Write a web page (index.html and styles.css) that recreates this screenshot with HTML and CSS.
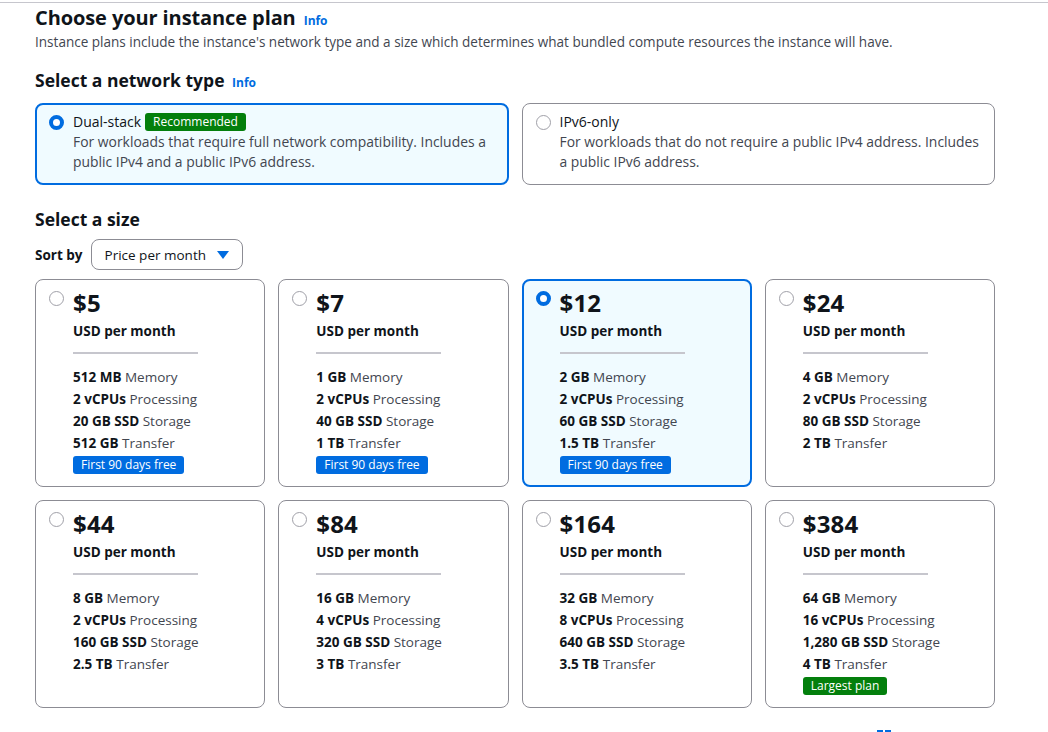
FILE: index.html
```html
<!DOCTYPE html>
<html lang="en">
<head>
<meta charset="utf-8">
<title>Choose your instance plan</title>
<link rel="stylesheet" href="styles.css">
</head>
<body>
<div class="topbar"></div>
<main class="page">
  <header class="section-head">
    <h1 class="h1">Choose your instance plan <a class="info" href="#">Info</a></h1>
    <p class="lead">Instance plans include the instance's network type and a size which determines what bundled compute resources the instance will have.</p>
  </header>

  <h2 class="h2 net-h">Select a network type <a class="info" href="#">Info</a></h2>
  <div class="net-grid">
    <label class="tile net selected">
      <span class="radio on"></span>
      <span class="tile-body">
        <span class="net-title">Dual-stack <span class="badge green">Recommended</span></span>
        <span class="net-desc">For workloads that require full network compatibility. Includes a public IPv4 and a public IPv6 address.</span>
      </span>
    </label>
    <label class="tile net">
      <span class="radio"></span>
      <span class="tile-body">
        <span class="net-title">IPv6-only</span>
        <span class="net-desc">For workloads that do not require a public IPv4 address. Includes a public IPv6 address.</span>
      </span>
    </label>
  </div>

  <h2 class="h2 size-h">Select a size</h2>
  <div class="sort-row">
    <span class="sort-label">Sort by</span>
    <button class="select"><span>Price per month</span><svg class="caret" width="12" height="8" viewBox="0 0 12 8"><path d="M0 0h12L6 8z" fill="#006ce0"/></svg></button>
  </div>

  <div class="plan-grid">
    <label class="tile plan">
      <span class="radio"></span>
      <span class="tile-body">
        <span class="price">$5</span>
        <span class="per">USD per month</span>
        <span class="rule"></span>
        <span class="spec"><b>512 MB</b> Memory</span>
        <span class="spec"><b>2 vCPUs</b> Processing</span>
        <span class="spec"><b>20 GB SSD</b> Storage</span>
        <span class="spec"><b>512 GB</b> Transfer</span>
        <span class="badge blue">First 90 days free</span>
      </span>
    </label>
    <label class="tile plan">
      <span class="radio"></span>
      <span class="tile-body">
        <span class="price">$7</span>
        <span class="per">USD per month</span>
        <span class="rule"></span>
        <span class="spec"><b>1 GB</b> Memory</span>
        <span class="spec"><b>2 vCPUs</b> Processing</span>
        <span class="spec"><b>40 GB SSD</b> Storage</span>
        <span class="spec"><b>1 TB</b> Transfer</span>
        <span class="badge blue">First 90 days free</span>
      </span>
    </label>
    <label class="tile plan selected">
      <span class="radio on"></span>
      <span class="tile-body">
        <span class="price">$12</span>
        <span class="per">USD per month</span>
        <span class="rule"></span>
        <span class="spec"><b>2 GB</b> Memory</span>
        <span class="spec"><b>2 vCPUs</b> Processing</span>
        <span class="spec"><b>60 GB SSD</b> Storage</span>
        <span class="spec"><b>1.5 TB</b> Transfer</span>
        <span class="badge blue">First 90 days free</span>
      </span>
    </label>
    <label class="tile plan">
      <span class="radio"></span>
      <span class="tile-body">
        <span class="price">$24</span>
        <span class="per">USD per month</span>
        <span class="rule"></span>
        <span class="spec"><b>4 GB</b> Memory</span>
        <span class="spec"><b>2 vCPUs</b> Processing</span>
        <span class="spec"><b>80 GB SSD</b> Storage</span>
        <span class="spec"><b>2 TB</b> Transfer</span>
      </span>
    </label>
    <label class="tile plan">
      <span class="radio"></span>
      <span class="tile-body">
        <span class="price">$44</span>
        <span class="per">USD per month</span>
        <span class="rule"></span>
        <span class="spec"><b>8 GB</b> Memory</span>
        <span class="spec"><b>2 vCPUs</b> Processing</span>
        <span class="spec"><b>160 GB SSD</b> Storage</span>
        <span class="spec"><b>2.5 TB</b> Transfer</span>
      </span>
    </label>
    <label class="tile plan">
      <span class="radio"></span>
      <span class="tile-body">
        <span class="price">$84</span>
        <span class="per">USD per month</span>
        <span class="rule"></span>
        <span class="spec"><b>16 GB</b> Memory</span>
        <span class="spec"><b>4 vCPUs</b> Processing</span>
        <span class="spec"><b>320 GB SSD</b> Storage</span>
        <span class="spec"><b>3 TB</b> Transfer</span>
      </span>
    </label>
    <label class="tile plan">
      <span class="radio"></span>
      <span class="tile-body">
        <span class="price">$164</span>
        <span class="per">USD per month</span>
        <span class="rule"></span>
        <span class="spec"><b>32 GB</b> Memory</span>
        <span class="spec"><b>8 vCPUs</b> Processing</span>
        <span class="spec"><b>640 GB SSD</b> Storage</span>
        <span class="spec"><b>3.5 TB</b> Transfer</span>
      </span>
    </label>
    <label class="tile plan">
      <span class="radio"></span>
      <span class="tile-body">
        <span class="price">$384</span>
        <span class="per">USD per month</span>
        <span class="rule"></span>
        <span class="spec"><b>64 GB</b> Memory</span>
        <span class="spec"><b>16 vCPUs</b> Processing</span>
        <span class="spec"><b>1,280 GB SSD</b> Storage</span>
        <span class="spec"><b>4 TB</b> Transfer</span>
        <span class="badge green">Largest plan</span>
      </span>
    </label>
  </div>

  <p class="foot">Instance plans are charged hourly, up to the monthly price. Data transfer in excess of the allowance is charged. Learn more <svg width="14" height="14" viewBox="0 0 14 14" class="ext"><rect x="0" y="0" width="6" height="6" fill="#006ce0"/><rect x="8" y="0" width="6" height="6" fill="#006ce0"/></svg></p>
</main>
</body>
</html>
```

FILE: styles.css
```css
* { box-sizing: border-box; }
html, body { margin: 0; padding: 0; background: #fff; }
body {
  font-family: "Open Sans", "Noto Sans", Arial, sans-serif;
  color: #0f141a;
  font-size: 14px;
  line-height: 20px;
  overflow: hidden;
  height: 732px;
}
.topbar { height: 3px; border-bottom: 1px solid #c6c6cd; }
.page { width: 960px; margin-left: 35px; }
.h1 {
  margin: 2px 0 0;
  font-size: 20px;
  line-height: 26px;
  font-weight: 700;
  letter-spacing: -0.1px;
}
.info {
  font-size: 12px;
  line-height: 1;
  font-weight: 700;
  color: #006ce0;
  text-decoration: none;
  margin-left: 3px;
}
.lead { margin: 1px 0 0; color: #424650; font-size: 13.55px; }
.h2 {
  margin: 0;
  font-size: 17.5px;
  line-height: 24px;
  font-weight: 700;
}
.net-h { margin-top: 16px; }
.net-grid {
  margin-top: 11px;
  display: grid;
  grid-template-columns: 1fr 1fr;
  gap: 13px;
}
.tile {
  display: flex;
  gap: 9px;
  border: 1px solid #8c8c94;
  border-radius: 8px;
  padding: 8px 12px 12px 13px;
  background: #fff;
}
.tile.selected {
  border: 2px solid #006ce0;
  background: #f0fbff;
  padding: 7px 11px 11px 12px;
}
.radio {
  flex: none;
  width: 15px;
  height: 15px;
  margin-top: 3px;
  border-radius: 50%;
  border: 1.5px solid #a0a0a8;
  background: #fff;
}
.radio.on { border: 4px solid #006ce0; background: #fff; }
.tile-body { display: flex; flex-direction: column; align-items: flex-start; }
.net-title { display: flex; align-items: center; gap: 4px; font-size: 14px; line-height: 20px; }
.net-desc { color: #424650; font-size: 13.9px; line-height: 20px; }
.badge {
  display: inline-block;
  font-size: 12px;
  line-height: 18px;
  padding: 0 8px;
  border-radius: 3px;
  color: #fff;
  font-weight: 500;
}
.badge.green { background: #037f0c; }
.badge.blue { background: #006ce0; }
.size-h { margin-top: 22px; }
.sort-row { display: flex; align-items: center; gap: 8px; margin-top: 8px; }
.sort-label { font-weight: 700; font-size: 13.5px; }
.select {
  font: inherit;
  font-size: 13.5px;
  color: #0f141a;
  background: #fff;
  border: 1px solid #8c8c94;
  border-radius: 8px;
  height: 31px;
  padding: 0 13px;
  display: flex;
  align-items: center;
  justify-content: space-between;
  gap: 10px;
  width: 152px;
  white-space: nowrap;
}
.caret { flex: none; display: block; }
.plan-grid {
  margin-top: 9px;
  display: grid;
  grid-template-columns: repeat(4, 1fr);
  gap: 13px;
}
.tile.plan { padding-top: 8px; min-height: 208px; }
.tile.plan.selected { padding-top: 7px; }
.plan .radio { margin-top: 3px; }
.price { font-size: 24px; line-height: 30px; font-weight: 700; letter-spacing: 0.2px; }
.per { font-weight: 700; font-size: 13.5px; line-height: 20px; margin-top: 3px; }
.rule { width: 125px; height: 2px; background: #c6c6cd; margin: 11px 0 12px; }
.spec { color: #424650; font-size: 13.5px; line-height: 22px; }
.spec b { color: #0f141a; font-weight: 700; }
.plan .badge { margin-top: 2px; font-size: 12px; }
.foot {
  margin: 20px 0 0 37px;
  color: #424650;
  font-size: 14px;
  white-space: nowrap;
}
.ext { vertical-align: top; margin-top: 2px; }
```
